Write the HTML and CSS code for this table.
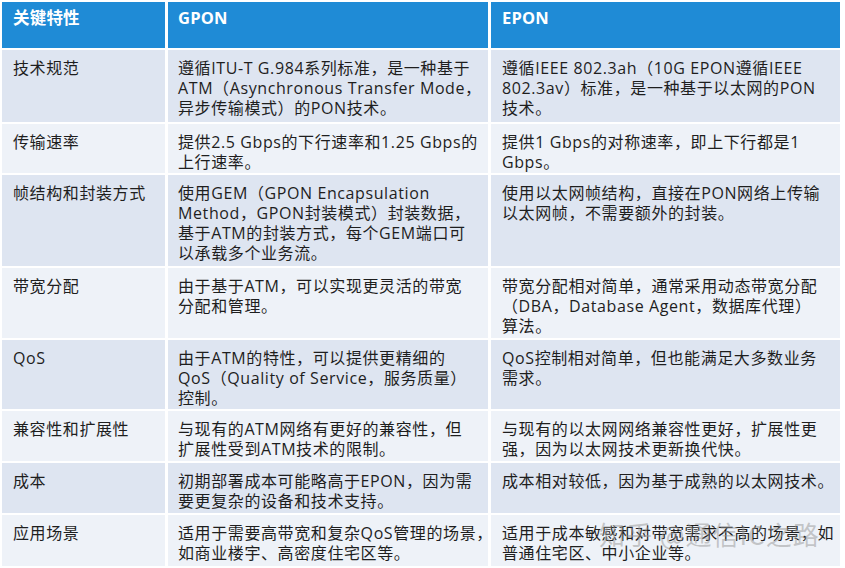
FILE: index.html
```html
<!DOCTYPE html>
<html lang="zh-CN">
<head>
<meta charset="utf-8">
<title>GPON vs EPON</title>
<link rel="stylesheet" href="styles.css">
</head>
<body>
<div class="table">
  <div class="cell head">关键特性</div>
  <div class="cell head">GPON</div>
  <div class="cell head">EPON</div>

  <div class="cell dark">技术规范</div>
  <div class="cell dark">遵循ITU-T G.984系列标准，是一种基于<br>ATM（Asynchronous Transfer Mode，<br>异步传输模式）的PON技术。</div>
  <div class="cell dark">遵循IEEE 802.3ah（10G EPON遵循IEEE<br>802.3av）标准，是一种基于以太网的PON<br>技术。</div>

  <div class="cell light">传输速率</div>
  <div class="cell light">提供2.5 Gbps的下行速率和1.25 Gbps的<br>上行速率。</div>
  <div class="cell light">提供1 Gbps的对称速率，即上下行都是1<br>Gbps。</div>

  <div class="cell dark">帧结构和封装方式</div>
  <div class="cell dark">使用GEM（GPON Encapsulation<br>Method，GPON封装模式）封装数据，<br>基于ATM的封装方式，每个GEM端口可<br>以承载多个业务流。</div>
  <div class="cell dark">使用以太网帧结构，直接在PON网络上传输<br>以太网帧，不需要额外的封装。</div>

  <div class="cell light">带宽分配</div>
  <div class="cell light">由于基于ATM，可以实现更灵活的带宽<br>分配和管理。</div>
  <div class="cell light">带宽分配相对简单，通常采用动态带宽分配<br>（DBA，Database Agent，数据库代理）<br>算法。</div>

  <div class="cell dark">QoS</div>
  <div class="cell dark">由于ATM的特性，可以提供更精细的<br>QoS（Quality of Service，服务质量）<br>控制。</div>
  <div class="cell dark">QoS控制相对简单，但也能满足大多数业务<br>需求。</div>

  <div class="cell light">兼容性和扩展性</div>
  <div class="cell light">与现有的ATM网络有更好的兼容性，但<br>扩展性受到ATM技术的限制。</div>
  <div class="cell light">与现有的以太网网络兼容性更好，扩展性更<br>强，因为以太网技术更新换代快。</div>

  <div class="cell dark">成本</div>
  <div class="cell dark">初期部署成本可能略高于EPON，因为需<br>要更复杂的设备和技术支持。</div>
  <div class="cell dark">成本相对较低，因为基于成熟的以太网技术。</div>

  <div class="cell light">应用场景</div>
  <div class="cell light">适用于需要高带宽和复杂QoS管理的场景，<br>如商业楼宇、高密度住宅区等。</div>
  <div class="cell light wm-host">适用于成本敏感和对带宽需求不高的场景，如<br>普通住宅区、中小企业等。<span class="watermark">知乎 @通信IC之路</span></div>
</div>
</body>
</html>
```
FILE: styles.css
```css
html, body {
  margin: 0;
  padding: 0;
  background: #ffffff;
}
body {
  padding: 2px 0 0 2px;
  font-family: "Open Sans", "Noto Sans CJK SC", sans-serif;
  font-size: 16px;
  letter-spacing: 0.6px;
  color: #1e1e1e;
}
.table {
  display: grid;
  grid-template-columns: 163px 320px 349px;
  grid-template-rows: 46px 72px 49px 91px 70px 69px 50px 50px 51px;
  column-gap: 3px;
  row-gap: 2px;
  width: 841px;
}
.cell {
  padding: 8px 0 0 11px;
  line-height: 20px;
  white-space: nowrap;
}
.cell:nth-child(3n+2) {
  padding-left: 10px;
}
.head {
  background: #1f8bd6;
  color: #ffffff;
  font-weight: 700;
  font-size: 16.5px;
  letter-spacing: 0.2px;
  padding-top: 5px;
  line-height: 22px;
}
.dark {
  background: #dee5f1;
}
.light {
  background: #eef2f8;
}
.wm-host {
  position: relative;
}
.watermark {
  position: absolute;
  left: 108px;
  top: 4px;
  font-size: 26px;
  line-height: 30px;
  color: rgba(150, 150, 150, 0.5);
  font-family: "Noto Sans CJK SC", sans-serif;
  letter-spacing: 1px;
}
```
